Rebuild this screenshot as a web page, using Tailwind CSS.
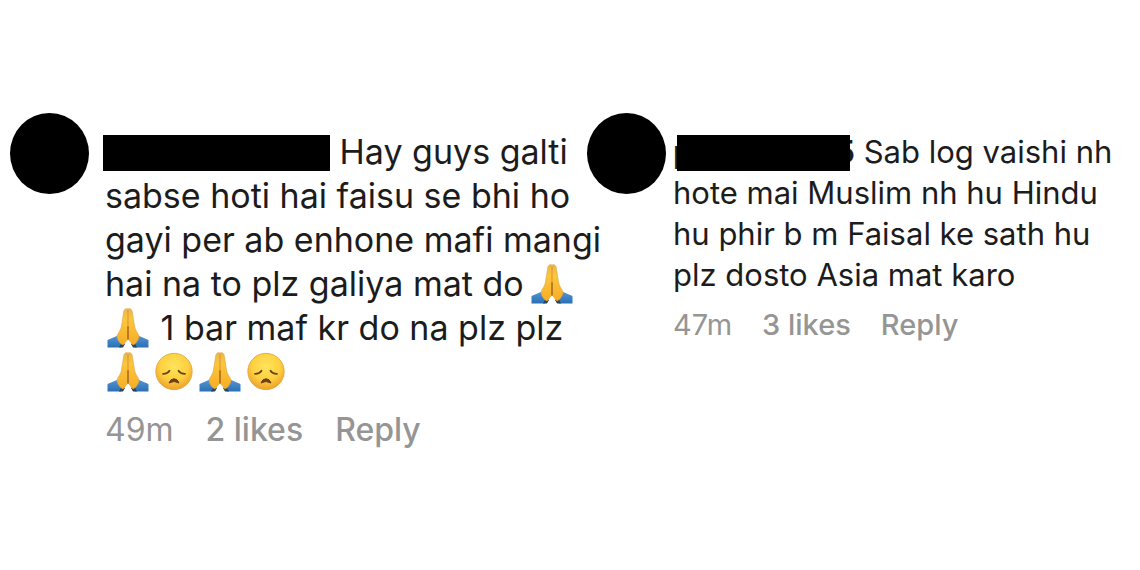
<!DOCTYPE html>
<html lang="en">
<head>
  <meta charset="UTF-8" />
  <meta name="viewport" content="width=device-width, initial-scale=1.0" />
  <title>Comments</title>
  <script src="https://cdn.jsdelivr.net/npm/@tailwindcss/browser@4"></script>
</head>
<body class="min-h-screen bg-white font-['Inter','Liberation_Sans',sans-serif] text-[#1c1c1c]">

  <!-- Emoji symbols -->
  <svg class="absolute size-0" aria-hidden="true">
    <defs>
      <linearGradient id="skin" x1="0" y1="0" x2="0" y2="1">
        <stop offset="0" stop-color="#e9b74c" />
        <stop offset="0.3" stop-color="#fbc63d" />
        <stop offset="1" stop-color="#f7ad24" />
      </linearGradient>
      <linearGradient id="sleeve" x1="0" y1="0" x2="0" y2="1">
        <stop offset="0" stop-color="#5596d6" />
        <stop offset="1" stop-color="#2b6fb3" />
      </linearGradient>
      <radialGradient id="face" cx="0.5" cy="0.35" r="0.65">
        <stop offset="0" stop-color="#ffe45c" />
        <stop offset="0.6" stop-color="#fdcf3f" />
        <stop offset="1" stop-color="#eda02a" />
      </radialGradient>
    </defs>
    <symbol id="pray" viewBox="0 0 46 40">
      <path d="M2.5 32 L13 27.5 L19 34 L16 39.5 H2.5 Z" fill="url(#sleeve)" />
      <path d="M43.5 32 L33 27.5 L27 34 L30 39.5 H43.5 Z" fill="url(#sleeve)" />
      <path d="M14 39.5 L17 34 L20 36 L18 39.5 Z M32 39.5 L29 34 L26 36 L28 39.5 Z" fill="#294461" />
      <path d="M23 1 C20.5 0 19 1.5 18.7 4 L16.5 18 C16 22 13 25 12 28 C12 31 14.5 35.5 18 37 L23 31 L28 37 C31.5 35.5 34 31 34 28 C33 25 30 22 29.5 18 L27.3 4 C27 1.5 25.5 0 23 1 Z" fill="url(#skin)" stroke="#dfa33a" stroke-width="0.6" />
      <path d="M23 2 V20" stroke="#d9932b" stroke-width="1" />
      <path d="M23 19 V31" stroke="#a8641a" stroke-width="1.5" stroke-linecap="round" />
    </symbol>
    <symbol id="sad" viewBox="0 0 46 40">
      <circle cx="23" cy="19.5" r="18.2" fill="url(#face)" stroke="#dda33a" stroke-width="0.8" />
      <path d="M12 21.8 Q16.5 22 18.5 18.8" fill="none" stroke="#6b4413" stroke-width="1.8" stroke-linecap="round" />
      <path d="M34 21.8 Q29.5 22 27.5 18.8" fill="none" stroke="#6b4413" stroke-width="1.8" stroke-linecap="round" />
      <path d="M18 31 Q19.5 26.8 23 26.8 Q26.5 26.8 28 31 Q23 28 18 31 Z" fill="#6b3f12" stroke="#6b3f12" stroke-width="1" stroke-linejoin="round" />
    </symbol>
  </svg>

  <main class="grid grid-cols-2 pt-[113px]">
    <!-- Left comment -->
    <article class="flex items-start gap-4 pl-[10px]">
      <div class="h-[81px] w-[79px] shrink-0 rounded-[50%] bg-black"></div>
      <div class="pt-[17px]">
        <p class="whitespace-nowrap text-[34px] leading-[44px]">
          <span class="relative inline-block w-[225px]">&nbsp;<span class="absolute top-[5px] right-0 h-[36px] w-[227px] bg-black"></span></span>
          Hay guys galti<br />
          sabse hoti hai faisu se bhi ho<br />
          gayi per ab enhone mafi mangi<br />
          hai na to plz galiya mat do <svg class="-ml-1 inline h-10 w-[46px] align-text-bottom" role="img" aria-label="folded hands"><use href="#pray" /></svg><br />
          <svg class="inline h-10 w-[46px] align-text-bottom" role="img" aria-label="folded hands"><use href="#pray" /></svg> 1 bar maf kr do na plz plz<br />
          <svg class="inline h-10 w-[46px] align-text-bottom" role="img" aria-label="folded hands"><use href="#pray" /></svg><svg class="inline h-10 w-[46px] align-text-bottom" role="img" aria-label="disappointed face"><use href="#sad" /></svg><svg class="inline h-10 w-[46px] align-text-bottom" role="img" aria-label="folded hands"><use href="#pray" /></svg><svg class="inline h-10 w-[46px] align-text-bottom" role="img" aria-label="disappointed face"><use href="#sad" /></svg>
        </p>
        <div class="mt-4 flex gap-8 text-[32px] leading-10 text-[#959595]">
          <time>49m</time>
          <button type="button" class="font-medium">2 likes</button>
          <button type="button" class="font-medium">Reply</button>
        </div>
      </div>
    </article>

    <!-- Right comment -->
    <article class="flex items-start gap-[7px] pl-[17px]">
      <div class="h-[81px] w-[79px] shrink-0 rounded-[50%] bg-black"></div>
      <div class="pt-[18px]">
        <p class="whitespace-nowrap text-[31px] leading-[41px]">
          <span class="relative inline-flex w-[182px] justify-between font-semibold"><span>p</span><span>5</span><span class="absolute top-1 left-1 h-[36px] w-[173px] bg-black"></span></span>
          Sab log vaishi nh<br />
          hote mai Muslim nh hu Hindu<br />
          hu phir b m Faisal ke sath hu<br />
          plz dosto Asia mat karo
        </p>
        <div class="mt-3 flex gap-[30px] text-[29px] leading-9 text-[#959595]">
          <time>47m</time>
          <button type="button" class="font-medium">3 likes</button>
          <button type="button" class="font-medium">Reply</button>
        </div>
      </div>
    </article>
  </main>

</body>
</html>
